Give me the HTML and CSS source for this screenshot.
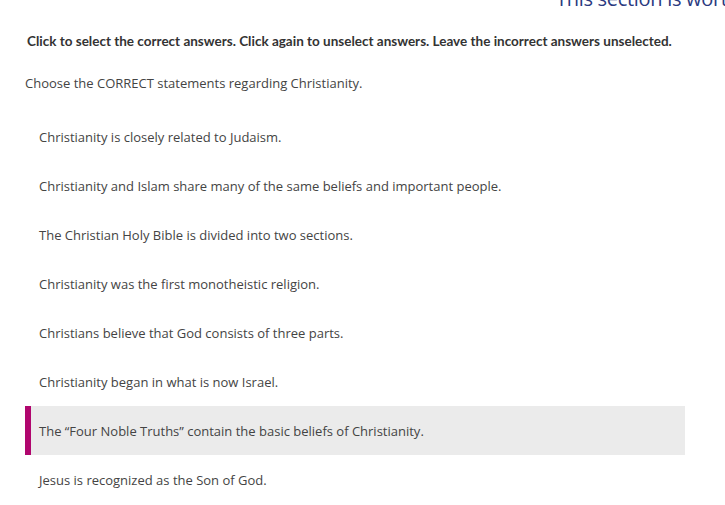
FILE: index.html
```html
<!DOCTYPE html>
<html lang="en">
<head>
    <meta charset="UTF-8">
    <title>Question</title>
    <link rel="stylesheet" href="styles.css">
</head>
<body>
    <div class="section-worth">This section is worth</div>

    <section id="questionSection">
        <p class="instructions">Click to select the correct answers. Click again to unselect answers. Leave the incorrect answers unselected.</p>
        <p class="prompt">Choose the CORRECT statements regarding Christianity.</p>

        <!-- Answer choices -->
        <ul class="answer-list">
            <li class="answer">Christianity is closely related to Judaism.</li>
            <li class="answer">Christianity and Islam share many of the same beliefs and important people.</li>
            <li class="answer">The Christian Holy Bible is divided into two sections.</li>
            <li class="answer">Christianity was the first monotheistic religion.</li>
            <li class="answer">Christians believe that God consists of three parts.</li>
            <li class="answer">Christianity began in what is now Israel.</li>
            <li class="answer selected">The &ldquo;Four Noble Truths&rdquo; contain the basic beliefs of Christianity.</li>
            <li class="answer">Jesus is recognized as the Son of God.</li>
        </ul>
    </section>
</body>
</html>
```

FILE: styles.css
```css
/* General page styling */
body {
    font-family: 'Open Sans', 'Noto Sans', sans-serif;
    background-color: #ffffff;
    color: #444;
    margin: 0;
    padding: 0;
    overflow: hidden;
}

.section-worth {
    height: 0;
    padding-left: 556px;
    font-size: 20px;
    line-height: 20px;
    color: #2b3a80;
    white-space: nowrap;
    letter-spacing: -0.3px;
    transform: translateY(-11px);
}

#questionSection {
    width: 660px;
    margin-left: 25px;
    padding-top: 32px;
}

.instructions {
    margin: 0 0 0 2px;
    font-family: 'Lato', sans-serif;
    font-size: 13.5px;
    font-weight: bold;
    line-height: 18px;
    color: #333;
    white-space: nowrap;
}

.prompt {
    margin: 24px 0 0 0;
    font-size: 13px;
    line-height: 18px;
    color: #444;
}

/* Answer list */
.answer-list {
    list-style: none;
    margin: 20px 0 0 0;
    padding: 0;
}

.answer {
    height: 49px;
    display: flex;
    align-items: center;
    padding-left: 14px;
    font-size: 13px;
    color: #444;
}

.answer.selected {
    background-color: #ebebeb;
    border-left: 6px solid #b0066e;
    padding-left: 8px;
}
```
